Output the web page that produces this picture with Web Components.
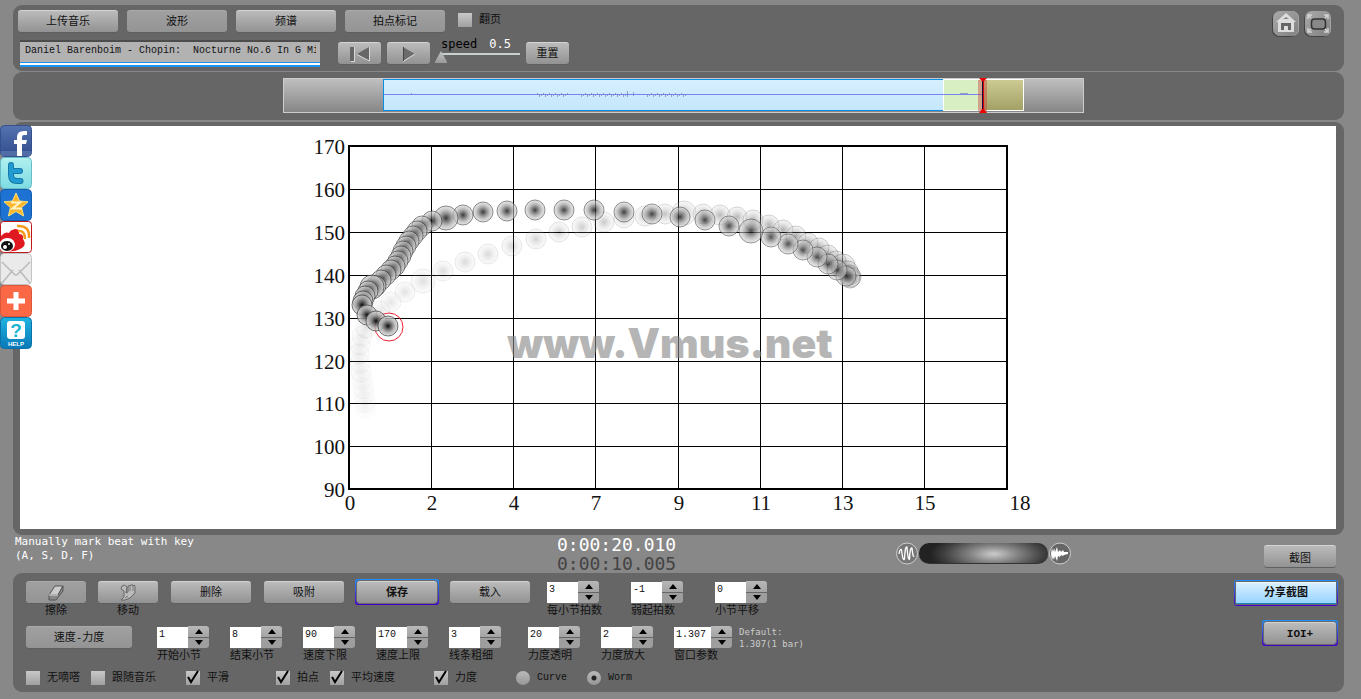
<!DOCTYPE html>
<html lang="zh">
<head>
<meta charset="utf-8">
<title>Vmus.net</title>
<style>
html,body{margin:0;min-height:100%}
body{background:#888;color:#111;font:11px/14px "Liberation Mono","Noto Sans CJK SC",monospace}
</style>
</head>
<body>
<vm-app></vm-app>
<script>
const define=(name,html,setup)=>customElements.define(name,class extends HTMLElement{
  connectedCallback(){
    if(this.shadowRoot)return;
    const root=this.attachShadow({mode:'open'});
    root.innerHTML='<style>*{box-sizing:border-box}[hidden]{display:none}button,input{font:inherit;color:inherit;margin:0;padding:0}</style>'+(typeof html==='function'?html(this):html);
    if(setup)setup(root,this);
  }
});

define('vm-panel',`<style>:host{display:block;background:#666;border-radius:9px}</style><slot></slot>`);

define('vm-button',`<style>
:host{display:block;position:relative;height:22px;isolation:isolate;flex:none}
button{display:flex;align-items:center;justify-content:center;width:100%;height:100%;border:0;border-top:1px solid #d4d4d4;border-radius:3px;background:linear-gradient(#bbb,#929292);box-shadow:0 1px 0 #5b6064}
:host([flat]) button{background:linear-gradient(#a0a0a0,#949494);border-top-color:#aaa}
:host([ring])::before{content:"";position:absolute;inset:-2px;z-index:-1;border-radius:3px;background:linear-gradient(#1e90ff,#40c)}
:host([ring]) button{font-weight:bold;box-shadow:0 0 0 1px #686868}
:host([primary]) button{background:linear-gradient(#d8efff,#98d4ff);border-top-color:#eef8ff;border-bottom:1px solid #2080c0;border-radius:0}
</style><button type="button"><slot></slot></button>`,(r,h)=>{const l=h.getAttribute('label');if(l)r.querySelector('button').setAttribute('aria-label',l)});

define('vm-check',h=>`<style>
:host{display:block;flex:none}
label{display:grid;grid-template-columns:14px auto;column-gap:7px;align-items:center;white-space:nowrap}
input{appearance:none;grid-area:1/1;width:14px;height:14px;background:linear-gradient(#c8c8c8,#a0a0a0)}
svg{grid-area:1/1;z-index:1;display:none;overflow:visible;pointer-events:none}
input:checked+svg{display:block}
</style><label><input type="checkbox" ${h.hasAttribute('checked')?'checked':''}><svg width="14" height="14"><path d="M2 6l3 5 7-11" fill="none" stroke="#000" stroke-width="2"/></svg><span><slot></slot></span></label>`);

define('vm-modes',`<style>
:host{display:flex;gap:20px;font-size:10px}
label{display:flex;align-items:center;gap:7px}
input{appearance:none;width:14px;height:14px;border-radius:50%;background:linear-gradient(#bababa,#969696)}
input:checked{background:radial-gradient(circle,#222 0 2px,transparent 3px),linear-gradient(#bababa,#969696)}
</style><label><input type="radio" name="mode">Curve</label><label><input type="radio" name="mode" checked>Worm</label>`);

define('vm-spin',h=>`<style>
:host{display:block;width:52px;flex:none}
:host([wide]){width:58px}
.box{display:flex}
input{flex:1;min-width:0;height:21px;margin-top:1px;border:0;background:#fff;color:#111;padding:0 0 6px 2px;font-size:10px}
.steps{width:21px;height:22px;display:flex;flex-direction:column;gap:1px}
.steps button{flex:1;border:0;background:linear-gradient(#b8b8b8,#a4a4a4);display:grid;place-items:center;border-radius:0 3px 0 0}
.steps button+button{border-radius:0 0 3px 0;background:#9e9e9e}
svg{display:block}
label{display:block;white-space:nowrap;margin-top:1px}
</style><div class="box"><input id="v" type="text" value="${h.getAttribute('value')}"><div class="steps">
<button type="button" aria-label="+"><svg width="8" height="5"><path d="M0 5L4 0l4 5z"/></svg></button>
<button type="button" aria-label="-"><svg width="8" height="5"><path d="M0 0h8L4 5z"/></svg></button></div></div>
<label for="v">${h.getAttribute('label')}</label>`);

define('vm-tool',`<style>:host{display:block;width:60px;text-align:center}div{margin-top:1px}</style><slot name="button"></slot><div><slot></slot></div>`);

define('vm-speed',`<style>
:host{display:grid;grid-template-columns:1fr auto;width:85px;font:12px/14px "DejaVu Sans Mono",monospace;height:26px}
label{color:#000;padding-left:6px}output{color:#fff;padding-right:9px}
input{grid-column:1/3;appearance:none;width:85px;height:12px;background:linear-gradient(#c9d0d0,#c9d0d0) right 2px/80px 2px no-repeat}
input::-webkit-slider-thumb{appearance:none;width:12px;height:12px;background:linear-gradient(#c4c4c4,#999);clip-path:polygon(50% 0,100% 90%,100% 100%,0 100%,0 90%)}
</style><label for="s">speed</label><output for="s">0.5</output><input id="s" type="range" min="0.5" max="2" step="0.1" value="0.5">`);

define('vm-overview',()=>{
  let bars='';
  const run=(a,b,h)=>{for(let x=a;x<b;x+=2)bars+=`M${x}.5 ${17-(x*7%h)}v${1+(x*5%h)}`};
  run(254,286,3);run(298,346,3);run(364,404,3);
  return `<style>:host{display:block}svg{display:block}</style>
<svg width="801" height="35" role="img" aria-label="波形"><defs>
<linearGradient id="g" x2="0" y2="1"><stop stop-color="#c0c0c0"/><stop offset="1" stop-color="#858585"/></linearGradient>
<linearGradient id="k" x2="0" y2="1"><stop stop-color="#cccb92"/><stop offset="1" stop-color="#a2a065"/></linearGradient>
<linearGradient id="b" x2="0" y2="1"><stop stop-color="#d6efff"/><stop offset="1" stop-color="#c4e6fc"/></linearGradient></defs>
<rect x=".5" y=".5" width="800" height="34" fill="url(#g)" stroke="#ccc"/>
<rect x="100.500" y="1.500" width="600" height="31" fill="url(#b)" stroke="#0a8de8"/>
<rect x="660.500" y="1.500" width="40" height="31" fill="#d8efc4" stroke="#fff"/>
<rect x="700" y="1.500" width="40.500" height="31" fill="url(#k)" stroke="#fff"/>
<path d="M101 16.500h599" stroke="#7d82f2"/><path d="${bars}M128.500 15v2M344.500 13v6M350.500 14v4M677 15.500h8" stroke="#7880b8" stroke-opacity=".7"/>
<rect x="695" y="2" width="9" height="31" fill="#c33" opacity=".4"/><path d="M699.500 1v32" stroke="#114" stroke-width="1"/><path d="M700.500 1v32" stroke="#d00"/>
<path d="M696 0h8l-3 3h-2zM696 35h8l-3-4h-2z" fill="#e00"/></svg>`;
});

/* Tempo-loudness worm: each bead is x, y and an optional radius, oldest first. */
const WORM=[[365,408],[365,402],[364,395],[363,388],[362,380],[361,372],[360,363],[359,354],[360,345],[362,336],[366,328],[372,319],[380,311],[391,302],[405,292],[423,281,12],[443,271],[465,262],[488,254],[512,246],[536,239],[559,232],[582,227],[604,222],[624,218],[645,216],[665,214],[684,213,12],[703,214],[720,215],[737,217],[753,220],[769,225],[783,230],[796,236],[808,243],[819,248],[828,255],[836,261],[843,266,12],[848,271],[850,275],[851,277],[850,278],
[846,276],[837,270],[828,264],[817,257],[803,250],[788,244],[771,237],[751,231,12],[729,226],[705,220],[680,217],[652,214],[624,212],[594,210],[564,210],[535,210],[507,211],[483,212],[463,215],[446,218,12],[432,221],[422,226],[417,231],[413,236],[409,241],[406,246],[403,251],[401,256],[398,261],[395,266],[391,270],[386,275],[381,280],[376,286],[372,287,12],[368,291],[365,296],[363,301],[362,305],[367,315],[376,321],[388,326]];
define('vm-chart',()=>{
  let grid='',text='',beads='';
  const xs=[349,431,513,595,678,760,842,924,1007];
  for(let i=1;i<8;i++){grid+=`M${xs[i]}.5 146V489`;grid+=`M349 ${146+Math.round(i*42.9)}.5H1007`}
  for(let i=0;i<9;i++)text+=`<text x="345" y="${154+Math.round(i*42.9)}" text-anchor="end">${170-i*10}</text>`;
  [0,2,4,7,9,11,13,15,18].forEach((v,i)=>text+=`<text x="${i==8?1020:xs[i]+1}" y="510" text-anchor="middle">${v}</text>`);
  WORM.forEach(([x,y,r=10],i)=>{
    const t=i/(WORM.length-1),o=i<44?.03+.42*Math.pow(t*2,1.5):.3+.65*t;
    beads+=`<g opacity="${o.toFixed(2)}"><circle cx="${x}" cy="${y}" r="${r}" fill="url(#w)" stroke="#444" stroke-width=".8"/></g>`;
  });
  return `<style>:host{display:flex;flex-direction:column;align-items:center;background:#fff}svg{display:block}
.axis{font:21px "Liberation Serif",serif;fill:#111}.mark{font:900 41px Inter,"Liberation Sans",sans-serif;fill:#888}</style>
<svg width="720" height="403" viewBox="318 126 720 403" overflow="visible"><defs><radialGradient id="w"><stop stop-color="#000"/><stop offset=".3" stop-color="#5a5a5a"/><stop offset=".65" stop-color="#a8a8a8" stop-opacity=".9"/><stop offset="1" stop-color="#d8d8d8" stop-opacity=".75"/></radialGradient></defs>
<path d="${grid}" stroke="#000" fill="none"/><rect x="349" y="146" width="658" height="343" fill="none" stroke="#000" stroke-width="2"/>
<g class="axis">${text}</g><circle cx="389" cy="327" r="14" fill="none" stroke="#f02030"/>${beads}
<text class="mark" x="670" y="358" text-anchor="middle" opacity=".62">www.Vmus.net</text></svg>`;
});

define('vm-share',`<style>
:host{position:absolute;left:0;top:125px;z-index:5;display:flex;flex-direction:column}
a,svg{display:block;width:32px;height:32px}
text{font:bold 6px "Liberation Sans",sans-serif;fill:#fff}.q{font-size:19px;fill:#1ab5d4}
</style>
<svg width="0" height="0" style="position:absolute;width:0;height:0"><defs>
<linearGradient id="f" x2="0" y2="1"><stop stop-color="#5573b0"/><stop offset="1" stop-color="#304c8c"/></linearGradient>
<linearGradient id="t" x2="0" y2="1"><stop stop-color="#b2f0f0"/><stop offset="1" stop-color="#7cdce2"/></linearGradient>
<linearGradient id="h" x2="0" y2="1"><stop stop-color="#20b4e0"/><stop offset="1" stop-color="#0878b8"/></linearGradient></defs></svg>
<a href="#" aria-label="Facebook"><svg><rect x=".5" y=".5" width="31" height="31" rx="4" fill="url(#f)" stroke="#35508c"/><path d="M1 26h30v5H1z" fill="#6f8abb" opacity=".5"/><path d="M17 31V19h-3v-4h3v-3q0-6 7-6h3v4h-3q-2 0-2 2v3h5l-1 4h-4v12z" fill="#fff"/></svg></a>
<a href="#" aria-label="Twitter"><svg><rect x=".5" y=".5" width="31" height="31" rx="4" fill="url(#t)" stroke="#68bcc6"/><path d="M11 8v10q0 6 6 6h3.500M11 14h9" fill="none" stroke="#1578a8" stroke-width="6" stroke-linecap="round"/><path d="M11 8v10q0 6 6 6h3.500M11 14h9" fill="none" stroke="#229bd0" stroke-width="4" stroke-linecap="round"/></svg></a>
<a href="#" aria-label="QZone"><svg><rect x=".5" y=".5" width="31" height="31" rx="4" fill="#1e72d2" stroke="#145cae"/><path d="M16 4l3.500 8 8.500.8-6.400 5.700 2 8.500-7.600-4.500L8.400 27l2-8.500L4 12.800l8.500-.8z" fill="#fdb62a" stroke="#ffe27a"/><path d="M11 13.500h9l-7.500 6H22" fill="none" stroke="#fff6c8" stroke-width="2"/></svg></a>
<a href="#" aria-label="Weibo"><svg><rect x=".5" y=".5" width="31" height="31" rx="3" fill="#fff" stroke="#c01818"/><path d="M1 15q4-5 8-3 1-3 6-4 5 0 4 5 5 0 4 5 4 6-1 9-8 5-21 3z" fill="#e01820"/><ellipse cx="7" cy="24" rx="8" ry="7" fill="#fff" transform="rotate(-15 7 24)"/><ellipse cx="7" cy="25" rx="6" ry="5" fill="#111"/><circle cx="5" cy="26" r="2" fill="#fff"/><circle cx="9" cy="23" r="1" fill="#fff"/><path d="M18 10q7-1 7 8M17 5q13-1 12 12" fill="none" stroke="#f59a1c" stroke-width="2.500"/></svg></a>
<a href="#" aria-label="Email"><svg><rect x=".5" y=".5" width="31" height="31" rx="4" fill="#eaeaea" stroke="#c4c4c4"/><path d="M2 30l11-13M30 30L19 17M2 9l12 12q2 2 4 0L30 9" fill="none" stroke="#bbb" stroke-width="1.500"/></svg></a>
<a href="#" aria-label="More"><svg><rect x=".5" y=".5" width="31" height="31" rx="4" fill="#fb6846" stroke="#dc5638"/><path d="M16 7v18M7 16h18" stroke="#fff" stroke-width="5"/></svg></a>
<a href="#" aria-label="Help"><svg><rect x=".5" y=".5" width="31" height="31" rx="4" fill="url(#h)" stroke="#0872ac"/><rect x="7" y="4" width="18" height="18" rx="3" fill="#fff"/><text class="q" x="16" y="20" text-anchor="middle">?</text><text x="16" y="29" text-anchor="middle">HELP</text></svg></a>`);

define('vm-icon-button',h=>`<style>:host{display:block}button{display:block;width:26px;height:25px;border:0;border-radius:7px;background:linear-gradient(135deg,#aaa,#808080);box-shadow:-1px 1px 0 #444,inset -1px 0 0 #a4a4a4}svg{display:block}</style>
<button type="button" aria-label="${h.getAttribute('label')}"><svg width="26" height="25">${h.getAttribute('kind')==='home'?'<path d="M13 2L3 11h2v10h16V11h2z" fill="#ddd"/><path d="M8 19v-7h10v7h-3v-4h-4v4z" fill="#666"/><path d="M10 8l3-2 3 2z" fill="#888"/>':'<rect x="6.500" y="8" width="14" height="10" rx="3" fill="#888" stroke="#333" stroke-width="1.500"/><path d="M3 8V4h4M19 4h4v4M23 17v4h-4M7 21H3v-4M3 4l3 3M23 4l-3 3M23 21l-3-3M3 21l3-3" fill="none" stroke="#d2d2d2" stroke-width="1.500"/>'}</svg></button>`);

define('vm-header',`<style>
:host{display:flex;justify-content:space-between;padding:5px 13px 3px 5px}
.row{display:flex;gap:9px}.row vm-button{width:100px}
vm-check{margin:3px 0 0 4px}
.play{display:flex;margin:8px 0 0 2px;gap:6px}.play vm-button{width:43px;margin-top:2px}
.title{width:300px;height:27px;margin-right:12px;display:flex;flex-direction:column}
.title input{width:100%;height:23px;border:0;border-top:2px solid #4c4c4c;background:#b2b2b2;padding:0 4px 3px 5px;font-size:10px;color:#111;text-overflow:clip}
.bar{height:5px;background:#fff;border:solid #1a94ee;border-width:1px 0 2px}
.play vm-speed{margin:-3px 0 0 -1px}
.icons{display:flex;gap:6px;padding-top:1px}
svg{display:block}
</style><div><div class="row"><vm-button>上传音乐</vm-button><vm-button flat>波形</vm-button><vm-button>频谱</vm-button><vm-button flat>拍点标记</vm-button><vm-check>翻页</vm-check></div>
<div class="play"><div class="title"><input readonly aria-label="曲目" value="Daniel Barenboim - Chopin:  Nocturne No.6 In G Minor"><div class="bar"></div></div>
<vm-button label="回到开头"><svg width="22" height="16"><path d="M1 1h4v14H1zM20 1v14L8 8z" fill="#666"/><path d="M5.500 1v14.500H2M20.500 1v14L8 8.500" fill="none" stroke="#d8d8d8"/></svg></vm-button>
<vm-button label="播放"><svg width="16" height="16"><path d="M2 1l12 7L2 15z" fill="#6b6b6b"/><path d="M2 15.500L14 8" stroke="#ddd"/><path d="M2.500 15V1" stroke="#444"/></svg></vm-button>
<vm-speed></vm-speed><vm-button>重置</vm-button></div></div>
<div class="icons"><vm-icon-button kind="home" label="主页"></vm-icon-button><vm-icon-button kind="full" label="全屏"></vm-icon-button></div>`);

define('vm-status',`<style>
:host{display:grid;grid-template-columns:544fr 339fr 368fr auto;height:38px;color:#fff;font:11px/14px "DejaVu Sans Mono",monospace}
.tip{padding-left:2px}
.time{font-size:18px;line-height:19px}.time div+div{color:#444}
.mix{display:flex;align-items:center;align-self:center;gap:1px;margin-bottom:2px}
.mix input{appearance:none;width:129px;height:21px;border-radius:10px;background:radial-gradient(ellipse 64px 22px at 58% 55%,#ccc,#888 35%,#444 75%,#222);border-bottom:1px solid #333}
.mix input::-webkit-slider-thumb{appearance:none;width:1px;height:1px}
vm-button{width:72px;margin:10px 8px 0 0;color:#111;font:11px/14px "Noto Sans CJK SC",sans-serif}
svg{display:block}
</style><div class="tip">Manually mark beat with key<br>(A, S, D, F)</div>
<div class="time"><div>0:00:20.010</div><div>0:00:10.005</div></div>
<div class="mix"><svg width="22" height="23"><circle cx="11" cy="11.500" r="10.500" fill="#777" stroke="#ccc"/><path d="M3 12q1-6 2.500-4Q7 20 8.500 17 9 4 11 5q1 14 2.500 12Q14 5 16 6q1 10 2 8" fill="none" stroke="#fff" stroke-width="1.300"/></svg>
<input type="range" aria-label="混音"><svg width="22" height="23"><circle cx="11" cy="11.500" r="10.500" fill="#666" stroke="#ccc"/><path d="M2 11.500L3 6l1 4 1-4 1 4 2-5 1 5 2-2 1 2 2-2 1 2 4 0v2l-4 1-1 1-2-1-1 2-2-1-1 5-2-5-1 4-1-3-1 3z" fill="#fff"/></svg></div>
<vm-button>截图</vm-button>`);

define('vm-controls',`<style>
:host{display:flex;justify-content:space-between;padding:8px 8px 0 13px;height:119px;box-sizing:border-box}
.row{display:flex;height:45px;gap:13px}
vm-button{width:80px}.tools{display:flex;gap:12px}.tools vm-button{width:60px}
.beats{display:flex;gap:32px;margin-left:4px}
.params{display:flex;gap:21px;margin-left:12px}.params+.params{margin-left:14px}
.mode{width:106px}
.hint{color:#ccc;font:9px/12px "DejaVu Sans Mono",monospace;margin-left:-6px}
.checks{display:flex;align-items:center;height:14px;gap:11px}
.sep{margin-left:19px}.far{margin-left:36px}.mid{margin-left:28px}
.right{display:flex;flex-direction:column;align-items:flex-end;gap:18px;padding-top:1px}
.right vm-button{width:72px}.right .share{width:100px}
svg{display:block}
</style><div>
<div class="row"><div class="tools"><vm-tool><vm-button slot="button" flat label="擦除"><svg width="18" height="16"><path d="M2 10L8 1h8l-5 9z" fill="#ccc" stroke="#555"/><path d="M2 10v5h7l7-9V1l-5 9z" fill="#888" stroke="#555"/><path d="M2 10h9" stroke="#eee"/></svg></vm-button>擦除</vm-tool>
<vm-tool><vm-button slot="button" label="移动"><svg width="18" height="17"><path d="M3 2q3-2 5 1l-1 6 2-1V2q2-1 2 0l1-1q2-1 2 1l1-1q1 0 1 2v6l-5 5-5 2H2l3-3V7L2 5z" fill="#bbb" stroke="#666"/><path d="M11 2v5M14 2v5M6 14l3-2" stroke="#777"/></svg></vm-button>移动</vm-tool></div>
<vm-button>删除</vm-button><vm-button>吸附</vm-button><vm-button ring>保存</vm-button><vm-button>载入</vm-button>
<div class="beats"><vm-spin value="3" label="每小节拍数"></vm-spin><vm-spin value="-1" label="弱起拍数"></vm-spin><vm-spin value="0" label="小节平移"></vm-spin></div></div>
<div class="row"><vm-button class="mode" flat>速度-力度</vm-button>
<div class="params"><vm-spin value="1" label="开始小节"></vm-spin><vm-spin value="8" label="结束小节"></vm-spin><vm-spin value="90" label="速度下限"></vm-spin><vm-spin value="170" label="速度上限"></vm-spin><vm-spin value="3" label="线条粗细"></vm-spin></div>
<div class="params"><vm-spin value="20" label="力度透明"></vm-spin><vm-spin value="2" label="力度放大"></vm-spin><vm-spin wide value="1.307" label="窗口参数"></vm-spin></div>
<div class="hint">Default:<br>1.307(1 bar)</div></div>
<div class="checks"><vm-check>无嘀嗒</vm-check><vm-check>跟随音乐</vm-check><vm-check class="sep" checked>平滑</vm-check><vm-check class="far" checked>拍点</vm-check><vm-check checked>平均速度</vm-check><vm-check class="mid" checked>力度</vm-check><vm-modes class="mid"></vm-modes></div>
</div>
<div class="right"><vm-button class="share" ring primary>分享截图</vm-button><vm-button ring>IOI+</vm-button></div>`);

define('vm-app',`<style>
:host{display:flex;flex-direction:column;min-height:100vh;box-sizing:border-box;padding:5px 17px 7px 13px}
.top{height:66px}
.wave{display:flex;justify-content:center;margin:1px 0 2px;padding:6px 0 7px 10px;height:48px}
.chart{flex:1;display:flex;padding:4px 8px 6px 7px}vm-chart{flex:1}
</style><vm-share></vm-share>
<vm-panel class="top"><vm-header></vm-header></vm-panel>
<vm-panel class="wave"><vm-overview></vm-overview></vm-panel>
<vm-panel class="chart"><vm-chart></vm-chart></vm-panel>
<vm-status></vm-status>
<vm-panel><vm-controls></vm-controls></vm-panel>`);
</script>
</body>
</html>
